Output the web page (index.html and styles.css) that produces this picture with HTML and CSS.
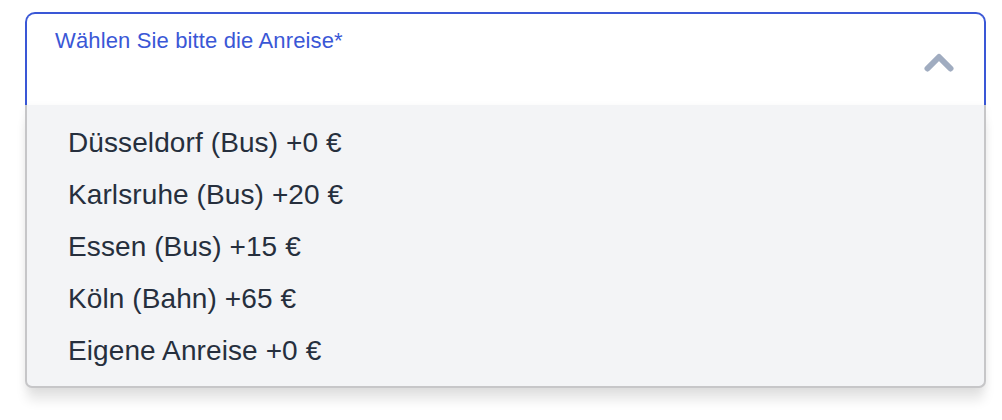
FILE: index.html
```html
<!DOCTYPE html>
<html lang="de">
<head>
<meta charset="utf-8">
<link rel="stylesheet" href="styles.css">
</head>
<body>
<div class="page">
  <div class="select">
    <div class="field">
      <span class="label">Wählen Sie bitte die Anreise*</span>
      <svg class="chevron" width="30" height="20" viewBox="0 0 30 20" aria-hidden="true">
        <polyline points="3.5,16.5 15,5 26.5,16.5" fill="none" stroke="#a0acc0" stroke-width="6" stroke-linecap="round" stroke-linejoin="round"/>
      </svg>
    </div>
    <ul class="menu">
      <li class="option">Düsseldorf (Bus) +0 €</li>
      <li class="option">Karlsruhe (Bus) +20 €</li>
      <li class="option">Essen (Bus) +15 €</li>
      <li class="option">Köln (Bahn) +65 €</li>
      <li class="option">Eigene Anreise +0 €</li>
    </ul>
  </div>
</div>
</body>
</html>
```

FILE: styles.css
```css
html, body {
  margin: 0;
  padding: 0;
  background: #ffffff;
}

body {
  font-family: "Liberation Sans", Arial, sans-serif;
}

.page {
  padding: 12px 16px 30px 25px;
}

.select {
  width: 961px;
}

.field {
  box-sizing: border-box;
  height: 93px;
  border: 2px solid #3a57d6;
  border-bottom: none;
  border-radius: 10px 10px 0 0;
  display: flex;
  justify-content: space-between;
  align-items: flex-start;
  padding: 14px 30px 0 28px;
}

.label {
  color: #3a57d6;
  font-size: 22px;
  line-height: 26px;
  letter-spacing: 0.14px;
}

.chevron {
  margin-top: 24px;
}

.menu {
  margin: 0;
  padding: 12px 0 9px 0;
  list-style: none;
  background: #f3f4f6;
  border: 2px solid #c6c6c8;
  border-top: none;
  border-radius: 0 0 7px 7px;
  box-shadow: 0 14px 12px -2px rgba(0, 0, 0, 0.1), 0 2px 8px rgba(0, 0, 0, 0.05);
}

.option {
  padding: 0 0 0 41px;
  height: 52px;
  line-height: 52px;
  font-size: 28px;
  letter-spacing: 0.1px;
  color: #262f3d;
}
```
